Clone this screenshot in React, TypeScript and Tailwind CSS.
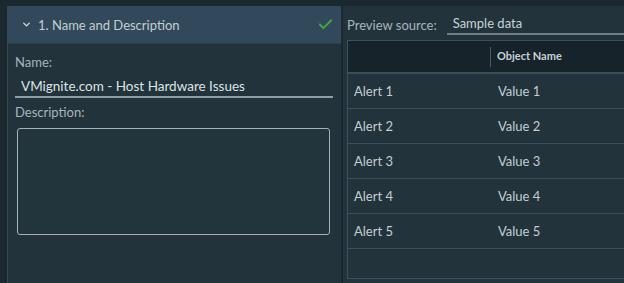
import { Check, ChevronDown } from "lucide-react";

const rows = [1, 2, 3, 4, 5];

export default function App() {
  return (
    <div
      className="w-[624px] h-[283px] overflow-hidden bg-[#1b2830] flex pt-[6px] pl-[7px]"
      style={{ fontFamily: "Lato, 'Open Sans', sans-serif" }}
    >
      {/* Left: wizard step */}
      <div className="w-[334px] shrink-0 flex flex-col bg-[#22333b] border-l border-[#34495a]">
        <div className="h-[38px] shrink-0 bg-[#31495a] flex items-center pl-[13px] pr-[7px] border-b border-[#2a3e4b]">
          <ChevronDown className="w-[11px] h-[11px] text-[#d4dde2]" strokeWidth={3} />
          <span className="ml-[6px] pt-[3px] text-[13px] text-[#c3ced4]">1. Name and Description</span>
          <Check className="ml-auto w-[17px] h-[17px] text-[#3fae3a]" strokeWidth={2.5} />
        </div>
        <div className="flex flex-col px-[7px]">
          <label className="mt-[10px] text-[13px] leading-[16px] text-[#a8b5bb]">Name:</label>
          <div className="mt-[4px] h-[24px] pt-[3px] border-b-2 border-[#8f9ea5] pl-[6px] mr-[1px] text-[13.5px] text-[#dbe3e7] leading-[18px]">
            VMignite.com - Host Hardware Issues
          </div>
          <label className="mt-[6px] text-[13px] leading-[16px] text-[#a8b5bb]">Description:</label>
          <div className="mt-[8px] ml-[2px] w-[313px] h-[107px] rounded-[3px] border border-[#a7b2b7] bg-[#22343c]" />
        </div>
      </div>

      {/* Right: preview */}
      <div className="flex-1 flex flex-col bg-[#22333b] border-l-2 border-[#1b2830]">
        <div className="h-[29px] shrink-0 flex items-end pl-[4px]">
          <span className="text-[13px] leading-[16px] text-[#a8b5bb] pb-[2px]">Preview source:</span>
          <div className="ml-[10px] flex-1 border-b-2 border-[#6f7f87] pl-[6px] pb-[2px] text-[13px] leading-[16px] text-[#c9d3d8]">
            Sample data
          </div>
        </div>
        <div className="mt-[5px] ml-[4px] h-[239px] border border-[#3a5063] border-r-0 flex flex-col">
          <div className="h-[33px] shrink-0 bg-[#17232a] flex items-center border-b-2 border-[#3a4f5e]">
            <div className="w-[143px] h-[20px] border-r border-[#4a5a64]" />
            <span className="pl-[6px] text-[11px] font-bold text-[#c6d0d5]">Object Name</span>
          </div>
          {rows.map((n) => (
            <div
              key={n}
              className="h-[35px] shrink-0 flex items-center border-b border-[#3a4f5e] pt-[2px] text-[13px] text-[#c3ced4]"
            >
              <span className="w-[143px] pl-[6px]">Alert {n}</span>
              <span className="pl-[7px]">Value {n}</span>
            </div>
          ))}
        </div>
      </div>
    </div>
  );
}
